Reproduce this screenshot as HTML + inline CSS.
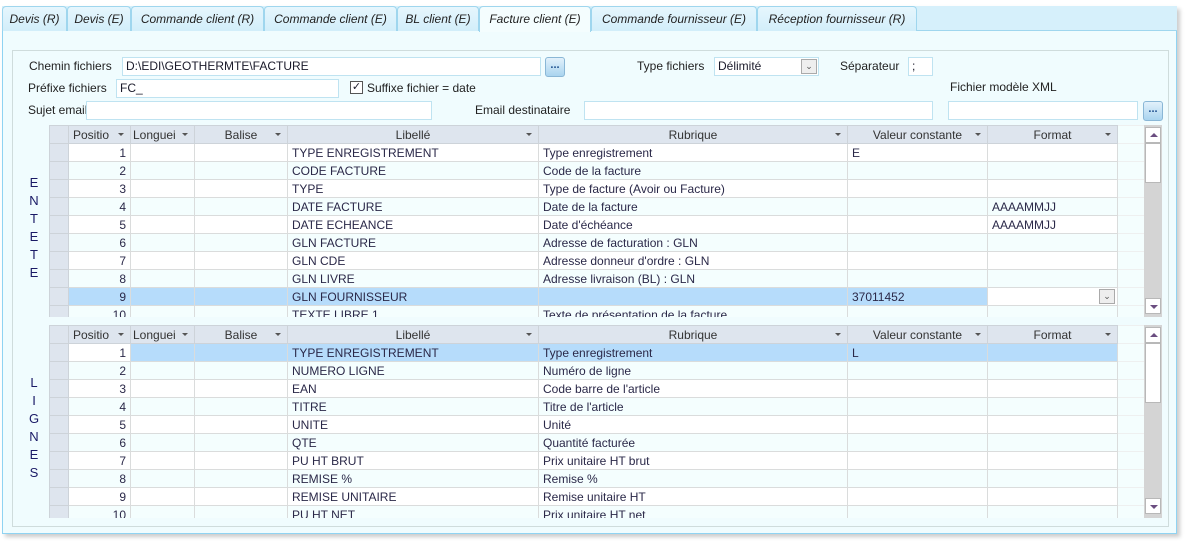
<!DOCTYPE html>
<html><head><meta charset="utf-8"><style>
*{box-sizing:border-box;margin:0;padding:0}
body{width:1185px;height:541px;background:#fff;font-family:"Liberation Sans",Arial,sans-serif;font-size:12px;color:#1a1a2a;position:relative;overflow:hidden}
.a{position:absolute}
.win{left:2px;top:6px;width:1175px;height:528px;background:#f0fcfe;border:1px solid #8fd3f2;border-top:none;box-shadow:3px 3px 4px #ccc}
.tabbar{left:2px;top:6px;width:1175px;height:25px;background:#d6f0fb;border-bottom:1px solid #9fd6ee}
.tab{position:absolute;top:6px;height:25px;border:1px solid #9fd6ee;border-bottom:none;border-radius:4px 4px 0 0;background:linear-gradient(#e6f6fd,#d2eefa);font-style:italic;font-size:12px;line-height:24px;text-align:center;color:#222;white-space:nowrap;overflow:hidden}
.tab.on{background:#f4fdfe;height:26px}
.panel{left:12px;top:50px;width:1157px;height:477px;border:1px solid #cfdcdc;background:#f0fcfe}
.lbl{position:absolute;font-size:12px;color:#222;white-space:nowrap}
.inp{position:absolute;background:#fff;border:1px solid #bfe3f1;height:19px;font-size:12px;padding-left:3px;line-height:17px;white-space:nowrap}
.btn{position:absolute;width:20px;height:20px;border:1px solid #8ab7d6;border-radius:3px;background:linear-gradient(#e2f1fb,#a9d4ef);color:#1b4d8c;font-weight:bold;font-size:11px;text-align:center;line-height:14px}
table{position:absolute;border-collapse:collapse;table-layout:fixed;font-size:12px}
td,th{height:18px;border:1px solid #dadcdc;white-space:nowrap;overflow:hidden;padding:0 4px;line-height:16px;color:#2a2848}
th{background:#dee5ee;font-weight:normal;text-align:center;position:relative;border-color:#cdd3d9;color:#333}
th .dd{position:absolute;right:6px;top:7px;border-left:3px solid transparent;border-right:3px solid transparent;border-top:3px solid #555}
td.s{background:#dee5ee;border-color:#cdd3d9}
td.n{text-align:right}
tr.o td{background:#f4fefe}
tr.w td{background:#fff}
tr.sel td{background:#b6dcfb}
td.e{background:#f4fefe !important;border-color:#eef0f0}
tr td.s{background:#dee5ee !important}
.sb{position:absolute;width:18px;background:#d4d4d4}
.sbb{position:absolute;left:1px;width:16px;height:16px;background:#fff;border:1px solid #b8b8b8}
.up{position:absolute;left:4px;top:5px;border-left:4px solid transparent;border-right:4px solid transparent;border-bottom:4px solid #6b4d80}
.dn{position:absolute;left:4px;top:6px;border-left:4px solid transparent;border-right:4px solid transparent;border-top:4px solid #6b4d80}
.vt{position:absolute;width:12px;text-align:center;font-size:13px;line-height:18px;color:#1a1a66}
</style></head><body>
<div class="a win"></div>
<div class="a tabbar"></div>
<div class="tab" style="left:2px;width:65px">Devis (R)</div>
<div class="tab" style="left:67px;width:64px">Devis (E)</div>
<div class="tab" style="left:131px;width:133px">Commande client (R)</div>
<div class="tab" style="left:264px;width:133px">Commande client (E)</div>
<div class="tab" style="left:397px;width:82px">BL client (E)</div>
<div class="tab on" style="left:479px;width:112px">Facture client (E)</div>
<div class="tab" style="left:591px;width:166px">Commande fournisseur (E)</div>
<div class="tab" style="left:757px;width:160px">Réception fournisseur (R)</div>
<div class="a panel"></div>

<div class="lbl" style="left:29px;top:59px">Chemin fichiers</div>
<div class="inp" style="left:122px;top:57px;width:419px">D:\EDI\GEOTHERMTE\FACTURE</div>
<div class="btn" style="left:545px;top:57px">...</div>
<div class="lbl" style="left:637px;top:59px">Type fichiers</div>
<div class="inp" style="left:714px;top:57px;width:105px">Délimité<span style="position:absolute;right:1px;top:1px;width:16px;height:15px;border:1px solid #aaa;background:#eee;font-size:9px;line-height:13px;text-align:center;color:#555">&#8964;</span></div>
<div class="lbl" style="left:840px;top:59px">Séparateur</div>
<div class="inp" style="left:908px;top:57px;width:25px">;</div>

<div class="lbl" style="left:28px;top:81px">Préfixe fichiers</div>
<div class="inp" style="left:116px;top:79px;width:223px">FC_</div>
<div class="a" style="left:350px;top:81px;width:13px;height:13px;border:1px solid #555;background:#fff;font-size:11px;line-height:11px;text-align:center">&#10003;</div>
<div class="lbl" style="left:367px;top:81px">Suffixe fichier = date</div>
<div class="lbl" style="left:950px;top:80px">Fichier modèle XML</div>

<div class="lbl" style="left:28px;top:103px">Sujet email</div>
<div class="inp" style="left:86px;top:101px;width:346px"></div>
<div class="lbl" style="left:475px;top:103px">Email destinataire</div>
<div class="inp" style="left:584px;top:101px;width:349px"></div>
<div class="inp" style="left:948px;top:101px;width:190px"></div>
<div class="btn" style="left:1143px;top:101px">...</div>

<div class="vt" style="left:28px;top:174px">E<br>N<br>T<br>E<br>T<br>E</div>
<div class="vt" style="left:28px;top:374px">L<br>I<br>G<br>N<br>E<br>S</div>

<div class="a" style="left:49px;top:125px;width:1113px;height:192px;overflow:hidden">
<table style="left:0;top:0;width:1095px">
<colgroup><col style="width:19px"><col style="width:62px"><col style="width:64px"><col style="width:93px"><col style="width:251px"><col style="width:309px"><col style="width:140px"><col style="width:130px"><col style="width:27px"></colgroup>
<tr><th style="background:#dee5ee"></th><th style="text-align:left">Positio<i class="dd"></i></th><th style="text-align:left;padding-left:2px">Longuei<i class="dd"></i></th><th>Balise<i class="dd"></i></th><th>Libellé<i class="dd"></i></th><th>Rubrique<i class="dd"></i></th><th>Valeur constante<i class="dd"></i></th><th>Format<i class="dd"></i></th><td class="e"></td></tr>
<tr class="w"><td class="s"></td><td class="n">1</td><td></td><td></td><td>TYPE ENREGISTREMENT</td><td>Type enregistrement</td><td>E</td><td></td><td class="e"></td></tr>
<tr class="o"><td class="s"></td><td class="n">2</td><td></td><td></td><td>CODE FACTURE</td><td>Code de la facture</td><td></td><td></td><td class="e"></td></tr>
<tr class="w"><td class="s"></td><td class="n">3</td><td></td><td></td><td>TYPE</td><td>Type de facture (Avoir ou Facture)</td><td></td><td></td><td class="e"></td></tr>
<tr class="o"><td class="s"></td><td class="n">4</td><td></td><td></td><td>DATE FACTURE</td><td>Date de la facture</td><td></td><td>AAAAMMJJ</td><td class="e"></td></tr>
<tr class="w"><td class="s"></td><td class="n">5</td><td></td><td></td><td>DATE ECHEANCE</td><td>Date d'échéance</td><td></td><td>AAAAMMJJ</td><td class="e"></td></tr>
<tr class="o"><td class="s"></td><td class="n">6</td><td></td><td></td><td>GLN FACTURE</td><td>Adresse de facturation : GLN</td><td></td><td></td><td class="e"></td></tr>
<tr class="w"><td class="s"></td><td class="n">7</td><td></td><td></td><td>GLN CDE</td><td>Adresse donneur d'ordre : GLN</td><td></td><td></td><td class="e"></td></tr>
<tr class="o"><td class="s"></td><td class="n">8</td><td></td><td></td><td>GLN LIVRE</td><td>Adresse livraison (BL) : GLN</td><td></td><td></td><td class="e"></td></tr>
<tr class="sel"><td class="s"></td><td class="n">9</td><td></td><td></td><td>GLN FOURNISSEUR</td><td></td><td>37011452</td><td style="background:#fff;position:relative"><span style="position:absolute;right:2px;top:1px;width:16px;height:15px;border:1px solid #aaa;background:#eee;font-size:9px;line-height:13px;text-align:center;color:#555">&#8964;</span></td><td class="e"></td></tr>
<tr class="o"><td class="s"></td><td class="n">10</td><td></td><td></td><td>TEXTE LIBRE 1</td><td>Texte de présentation de la facture</td><td></td><td></td><td class="e"></td></tr>
</table>
<div class="sb" style="left:1095px;top:0;height:192px"><div class="sbb" style="top:2px"><i class="up"></i></div><div class="sbb" style="top:18px;height:40px"></div><div class="sbb" style="top:173px"><i class="dn"></i></div></div>
</div>

<div class="a" style="left:49px;top:325px;width:1113px;height:193px;overflow:hidden">
<table style="left:0;top:0;width:1095px">
<colgroup><col style="width:19px"><col style="width:62px"><col style="width:64px"><col style="width:93px"><col style="width:251px"><col style="width:309px"><col style="width:140px"><col style="width:130px"><col style="width:27px"></colgroup>
<tr><th></th><th style="text-align:left">Positio<i class="dd"></i></th><th style="text-align:left;padding-left:2px">Longuei<i class="dd"></i></th><th>Balise<i class="dd"></i></th><th>Libellé<i class="dd"></i></th><th>Rubrique<i class="dd"></i></th><th>Valeur constante<i class="dd"></i></th><th>Format<i class="dd"></i></th><td class="e"></td></tr>
<tr class="sel"><td class="s"></td><td class="n" style="background:#fff">1</td><td></td><td></td><td>TYPE ENREGISTREMENT</td><td>Type enregistrement</td><td>L</td><td></td><td class="e"></td></tr>
<tr class="o"><td class="s"></td><td class="n">2</td><td></td><td></td><td>NUMERO LIGNE</td><td>Numéro de ligne</td><td></td><td></td><td class="e"></td></tr>
<tr class="w"><td class="s"></td><td class="n">3</td><td></td><td></td><td>EAN</td><td>Code barre de l'article</td><td></td><td></td><td class="e"></td></tr>
<tr class="o"><td class="s"></td><td class="n">4</td><td></td><td></td><td>TITRE</td><td>Titre de l'article</td><td></td><td></td><td class="e"></td></tr>
<tr class="w"><td class="s"></td><td class="n">5</td><td></td><td></td><td>UNITE</td><td>Unité</td><td></td><td></td><td class="e"></td></tr>
<tr class="o"><td class="s"></td><td class="n">6</td><td></td><td></td><td>QTE</td><td>Quantité facturée</td><td></td><td></td><td class="e"></td></tr>
<tr class="w"><td class="s"></td><td class="n">7</td><td></td><td></td><td>PU HT BRUT</td><td>Prix unitaire HT brut</td><td></td><td></td><td class="e"></td></tr>
<tr class="o"><td class="s"></td><td class="n">8</td><td></td><td></td><td>REMISE %</td><td>Remise %</td><td></td><td></td><td class="e"></td></tr>
<tr class="w"><td class="s"></td><td class="n">9</td><td></td><td></td><td>REMISE UNITAIRE</td><td>Remise unitaire HT</td><td></td><td></td><td class="e"></td></tr>
<tr class="o"><td class="s"></td><td class="n">10</td><td></td><td></td><td>PU HT NET</td><td>Prix unitaire HT net</td><td></td><td></td><td class="e"></td></tr>
</table>
<div class="sb" style="left:1095px;top:0;height:193px"><div class="sbb" style="top:2px"><i class="up"></i></div><div class="sbb" style="top:18px;height:60px"></div><div class="sbb" style="top:173px"><i class="dn"></i></div></div>
</div>
</body></html>
